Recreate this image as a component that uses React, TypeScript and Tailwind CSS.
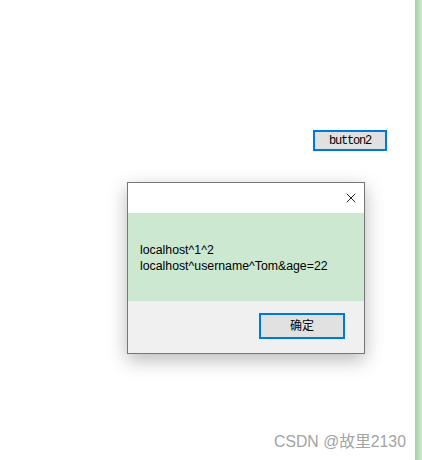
import { X } from 'lucide-react';

export default function App() {
  return (
    <div className="relative flex h-[460px] w-[422px] overflow-hidden bg-white font-['Liberation_Sans','Noto_Sans_CJK_SC',sans-serif]">
      {/* Desktop area */}
      <div className="relative flex-1">
        {/* button2 */}
        <div className="absolute left-[313px] top-[130px] flex h-[21px] w-[74px] items-center justify-center border-2 border-[#0078d7] bg-[#e1e1e1] font-['Liberation_Mono','Noto_Sans_CJK_SC',monospace] text-[12px] leading-none tracking-[-1.2px] text-black">
          button2
        </div>

        {/* Message box */}
        <div className="absolute left-[127px] top-[182px] flex w-[238px] flex-col border border-[#767676] bg-white shadow-[0_6px_18px_rgba(0,0,0,0.28)]">
          <div className="flex h-[30px] items-center justify-end pr-[5px]">
            <X className="h-[16px] w-[16px] text-black" strokeWidth={1.3} />
          </div>
          <div className="flex h-[88px] flex-col justify-center bg-[#cde8d0] pl-[12px] pt-[2px] text-[12.3px] leading-[16px] text-black">
            <span>localhost^1^2</span>
            <span>localhost^username^Tom&amp;age=22</span>
          </div>
          <div className="flex h-[52px] items-start justify-end bg-[#f0f0f0] pr-[19px] pt-[12px]">
            <div className="flex h-[26px] w-[86px] items-center justify-center border-2 border-[#0078d7] bg-[#e1e1e1] text-[12px] text-black">
              确定
            </div>
          </div>
        </div>

        {/* Watermark */}
        <div className="absolute left-[274px] top-[432px] text-[15.8px] leading-[20px] text-[#a3a3a3]">
          CSDN @故里2130
        </div>
      </div>

      {/* Green edge */}
      <div className="w-[7px] bg-gradient-to-r from-[#a5cfa6] to-[#cfe8d0]" />
    </div>
  );
}
